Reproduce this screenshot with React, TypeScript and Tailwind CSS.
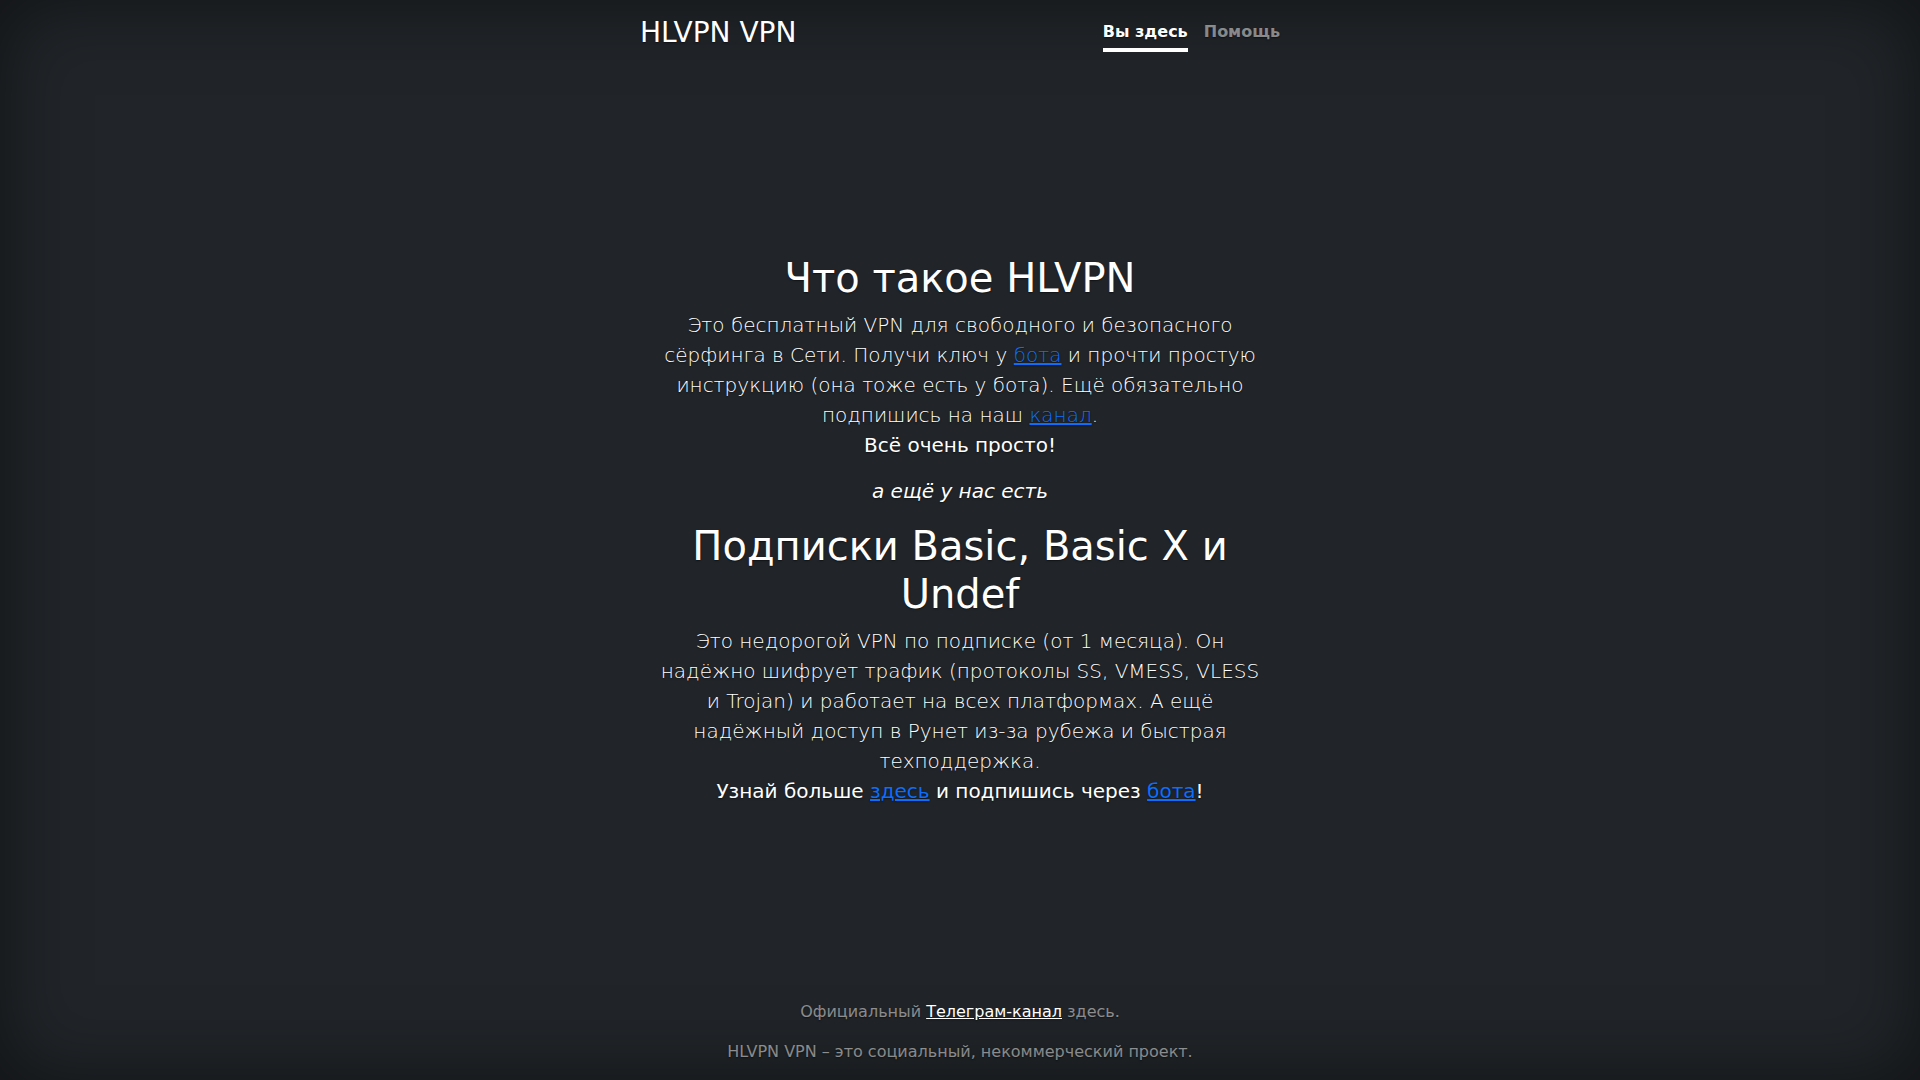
import React from "react";

const font = { fontFamily: '"DejaVu Sans", "Noto Sans", sans-serif' };

export default function App() {
  return (
    <div
      className="h-screen w-full bg-[#212529] text-white shadow-[inset_0_0_5rem_rgba(0,0,0,0.5)] [text-shadow:0_0.05rem_0.1rem_rgba(0,0,0,0.5)] text-[16px] leading-[1.5]"
      style={font}
    >
      <div className="mx-auto flex h-full w-full max-w-[42em] flex-col p-4 text-center">
        <header className="mb-auto flex items-start justify-between">
          <h3 className="m-0 text-[28px] font-medium leading-[1.2] text-white">HLVPN VPN</h3>
          <nav className="flex gap-4">
            <a className="border-b-4 border-white py-1 font-bold text-white" href="#">
              Вы здесь
            </a>
            <a className="border-b-4 border-transparent py-1 font-bold text-white/50" href="#">
              Помощь
            </a>
          </nav>
        </header>

        <main className="px-4 pt-6">
          <h1 className="mb-2 text-[40px] font-medium leading-[1.2]">Что такое HLVPN</h1>
          <p className="mb-4 text-[20px] font-light leading-[1.5]">
            Это бесплатный VPN для свободного и безопасного сёрфинга в Сети. Получи ключ у{" "}
            <a href="#" className="text-[#0d6efd] underline">бота</a> и прочти простую инструкцию (она тоже есть у бота). Ещё
            обязательно подпишись на наш <a href="#" className="text-[#0d6efd] underline">канал</a>.
            <br />
            <b className="font-normal">Всё очень просто!</b>
          </p>
          <p className="mb-4 text-[20px] italic leading-[1.5]">а ещё у нас есть</p>
          <h1 className="mb-2 text-[40px] font-medium leading-[1.2]">Подписки Basic, Basic X и Undef</h1>
          <p className="mb-4 text-[20px] font-light leading-[1.5]">
            Это недорогой VPN по подписке (от 1 месяца). Он надёжно шифрует трафик (протоколы SS, VMESS, VLESS и Trojan) и
            работает на всех платформах. А ещё надёжный доступ в Рунет из-за рубежа и быстрая техподдержка.
            <br />
            <b className="font-normal">
              Узнай больше <a href="#" className="text-[#0d6efd] underline">здесь</a> и подпишись через{" "}
              <a href="#" className="text-[#0d6efd] underline">бота</a>!
            </b>
          </p>
        </main>

        <footer className="mt-auto text-white/50">
          <p className="mb-4">
            Официальный <a href="#" className="text-white underline">Телеграм-канал</a> здесь.
          </p>
          <p className="mb-0">HLVPN VPN – это социальный, некоммерческий проект.</p>
        </footer>
      </div>
    </div>
  );
}
